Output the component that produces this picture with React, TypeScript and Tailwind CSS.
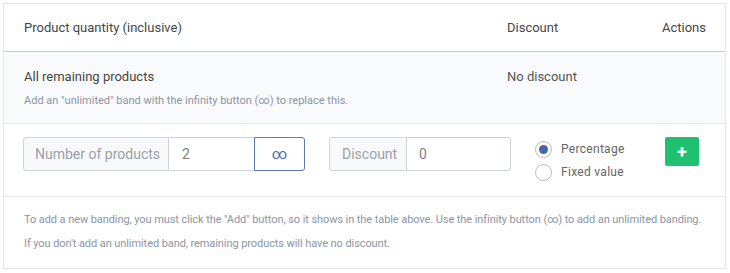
import React, { useState } from "react";

function App() {
  const [qty, setQty] = useState("2");
  const [discount, setDiscount] = useState("0");
  const [type, setType] = useState<"percentage" | "fixed">("percentage");

  return (
    <div className="w-[730px] h-[273px] bg-white pt-[3px] pl-[3px] font-['Roboto',sans-serif]">
      <div className="w-[723px] border border-[#e3e5e8] bg-white">
        {/* header */}
        <div className="flex items-center h-[48px] border-b border-[#c9cbce] pl-5 pr-[19px] text-[13px] text-[#454545]">
          <div className="w-[483px]">Product quantity (inclusive)</div>
          <div className="flex-1">Discount</div>
          <div>Actions</div>
        </div>

        {/* default band */}
        <div className="flex h-[72px] bg-[#f9fafc] border-b border-[#e6e8eb] pl-5 pr-[19px] pt-[16px]">
          <div className="w-[483px]">
            <p className="text-[13px] text-[#454545] leading-[18px]">All remaining products</p>
            <p className="mt-[8px] text-[11px] text-[#8c94a3] leading-[14px]">
              Add an "unlimited" band with the infinity button (∞) to replace this.
            </p>
          </div>
          <div className="flex-1 text-[13px] text-[#555] leading-[18px]">No discount</div>
        </div>

        {/* new band form */}
        <div className="flex items-start h-[73px] border-b border-[#e6e8eb] pl-[19px] pt-[13px]">
          <div className="flex h-[34px]">
            <span className="flex items-center px-[11px] w-[146px] whitespace-nowrap bg-[#f8f9fb] border border-[#cfd2d6] rounded-l-[3px] text-[14px] text-[#9aa0a8]">
              Number of products
            </span>
            <input
              value={qty}
              onChange={(e) => setQty(e.target.value)}
              className="w-[85px] border-y border-[#cfd2d6] px-[13px] text-[14px] text-[#808080] outline-none"
            />
            <button className="w-[51px] flex items-center justify-center border border-[#5a79b8] rounded-r-[3px] text-[15px] text-[#4d6db0]">
              ∞
            </button>
          </div>

          <div className="flex h-[34px] ml-[24px]">
            <span className="flex items-center px-3 w-[78px] whitespace-nowrap bg-[#f8f9fb] border border-[#cfd2d6] rounded-l-[3px] text-[14px] text-[#9aa0a8]">
              Discount
            </span>
            <input
              value={discount}
              onChange={(e) => setDiscount(e.target.value)}
              className="w-[104px] border border-l-0 border-[#cfd2d6] rounded-r-[3px] px-3 text-[14px] text-[#808080] outline-none"
            />
          </div>

          <div className="ml-[24px] mt-[3px] flex flex-col gap-[5px] text-[12px] text-[#666] tracking-[0.3px]">
            <label className="flex items-center gap-[9px] cursor-pointer" onClick={() => setType("percentage")}>
              <span className="w-[17px] h-[17px] rounded-full border border-[#b9bcc2] bg-white flex items-center justify-center">
                {type === "percentage" && <span className="w-[9px] h-[9px] rounded-full bg-[#4a64a8]" />}
              </span>
              Percentage
            </label>
            <label className="flex items-center gap-[9px] cursor-pointer" onClick={() => setType("fixed")}>
              <span className="w-[17px] h-[17px] rounded-full border border-[#b9bcc2] bg-white flex items-center justify-center">
                {type === "fixed" && <span className="w-[9px] h-[9px] rounded-full bg-[#4a64a8]" />}
              </span>
              Fixed value
            </label>
          </div>

          <button className="ml-auto mr-[26px] w-[34px] h-[29px] rounded-[2px] bg-[#1fc171] text-white text-[18px] font-bold leading-none flex items-center justify-center">
            +
          </button>
        </div>

        {/* help text */}
        <div className="h-[71px] pl-5 pt-[16px] text-[11px] tracking-[-0.08px] text-[#8c94a3] leading-[14px]">
          <p>
            To add a new banding, you must click the "Add" button, so it shows in the table above. Use the infinity
            button (∞) to add an unlimited banding.
          </p>
          <p className="mt-[10px]">If you don't add an unlimited band, remaining products will have no discount.</p>
        </div>
      </div>
    </div>
  );
}

export default App;
